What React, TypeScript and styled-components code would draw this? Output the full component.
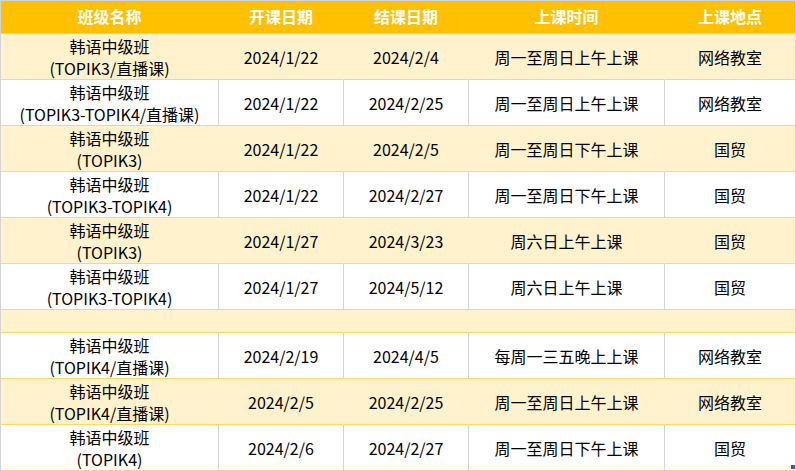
import styled, { createGlobalStyle } from 'styled-components';

const GlobalStyle = createGlobalStyle`
  html, body {
    margin: 0;
    padding: 0;
    background: #ffffff;
  }
  body {
    font-family: "Noto Sans CJK SC", "Noto Sans", sans-serif;
    color: #000000;
  }
`;

const StyledFrame = styled.div`
  position: relative;
  width: 796px;
  height: 471px;
  overflow: hidden;
`;

const StyledTable = styled.table`
  width: 796px;
  table-layout: fixed;
  border-collapse: separate;
  border-spacing: 0;
  border-left: 1px solid #d4d4d4;
  border-top: 1px solid #d4d4d4;
  font-size: 16px;
  line-height: 22px;
`;

const StyledHeadCell = styled.th`
  box-sizing: border-box;
  height: 33px;
  padding: 0 0 2px;
  background: #ffc000;
  color: #ffffff;
  font-weight: bold;
  text-align: center;
  border-right: 1px solid #ffc000;
  border-bottom: 1px solid #ffd966;
  &:last-child {
    border-right-color: #ffd966;
  }
`;

const StyledCell = styled.td<{ $tinted: boolean; $short?: boolean }>`
  box-sizing: border-box;
  height: ${({ $short }) => ($short ? '23px' : '46px')};
  padding: 0;
  text-align: center;
  vertical-align: middle;
  background: ${({ $tinted }) => ($tinted ? '#fff2cc' : '#ffffff')};
  border-right: 1px solid ${({ $tinted }) => ($tinted ? '#fff2cc' : '#d4d4d4')};
  border-bottom: 1px solid #ffd966;
  &:last-child {
    border-right-color: #ffd966;
  }
`;

const StyledLine = styled.div`
  white-space: nowrap;
`;

const StyledHandle = styled.div`
  position: absolute;
  right: 1px;
  bottom: 2px;
  width: 4px;
  height: 4px;
  background: #4456aa;
`;

interface Course {
  name: string;
  level: string;
  start: string;
  end: string;
  time: string;
  place: string;
}

const columns = [
  { title: '班级名称', width: 218 },
  { title: '开课日期', width: 125 },
  { title: '结课日期', width: 125 },
  { title: '上课时间', width: 196 },
  { title: '上课地点', width: 131 },
];

const firstGroup: Course[] = [
  { name: '韩语中级班', level: '(TOPIK3/直播课)', start: '2024/1/22', end: '2024/2/4', time: '周一至周日上午上课', place: '网络教室' },
  { name: '韩语中级班', level: '(TOPIK3-TOPIK4/直播课)', start: '2024/1/22', end: '2024/2/25', time: '周一至周日上午上课', place: '网络教室' },
  { name: '韩语中级班', level: '(TOPIK3)', start: '2024/1/22', end: '2024/2/5', time: '周一至周日下午上课', place: '国贸' },
  { name: '韩语中级班', level: '(TOPIK3-TOPIK4)', start: '2024/1/22', end: '2024/2/27', time: '周一至周日下午上课', place: '国贸' },
  { name: '韩语中级班', level: '(TOPIK3)', start: '2024/1/27', end: '2024/3/23', time: '周六日上午上课', place: '国贸' },
  { name: '韩语中级班', level: '(TOPIK3-TOPIK4)', start: '2024/1/27', end: '2024/5/12', time: '周六日上午上课', place: '国贸' },
];

const secondGroup: Course[] = [
  { name: '韩语中级班', level: '(TOPIK4/直播课)', start: '2024/2/19', end: '2024/4/5', time: '每周一三五晚上上课', place: '网络教室' },
  { name: '韩语中级班', level: '(TOPIK4/直播课)', start: '2024/2/5', end: '2024/2/25', time: '周一至周日上午上课', place: '网络教室' },
  { name: '韩语中级班', level: '(TOPIK4)', start: '2024/2/6', end: '2024/2/27', time: '周一至周日下午上课', place: '国贸' },
];

const CourseRow = ({ course, tinted }: { course: Course; tinted: boolean }) => (
  <tr>
    <StyledCell $tinted={tinted}>
      <StyledLine>{course.name}</StyledLine>
      <StyledLine>{course.level}</StyledLine>
    </StyledCell>
    <StyledCell $tinted={tinted}>{course.start}</StyledCell>
    <StyledCell $tinted={tinted}>{course.end}</StyledCell>
    <StyledCell $tinted={tinted}>{course.time}</StyledCell>
    <StyledCell $tinted={tinted}>{course.place}</StyledCell>
  </tr>
);

const App = () => (
  <>
    <GlobalStyle />
    <StyledFrame>
      <StyledTable>
        <colgroup>
          {columns.map((col) => (
            <col key={col.title} style={{ width: col.width }} />
          ))}
        </colgroup>
        <thead>
          <tr>
            {columns.map((col) => (
              <StyledHeadCell key={col.title}>{col.title}</StyledHeadCell>
            ))}
          </tr>
        </thead>
        <tbody>
          {firstGroup.map((course, i) => (
            <CourseRow key={`a${i}`} course={course} tinted={i % 2 === 0} />
          ))}
          <tr>
            {columns.map((col) => (
              <StyledCell key={col.title} $tinted $short />
            ))}
          </tr>
          {secondGroup.map((course, i) => (
            <CourseRow key={`b${i}`} course={course} tinted={i % 2 === 1} />
          ))}
        </tbody>
      </StyledTable>
      <StyledHandle />
    </StyledFrame>
  </>
);

export default App;
